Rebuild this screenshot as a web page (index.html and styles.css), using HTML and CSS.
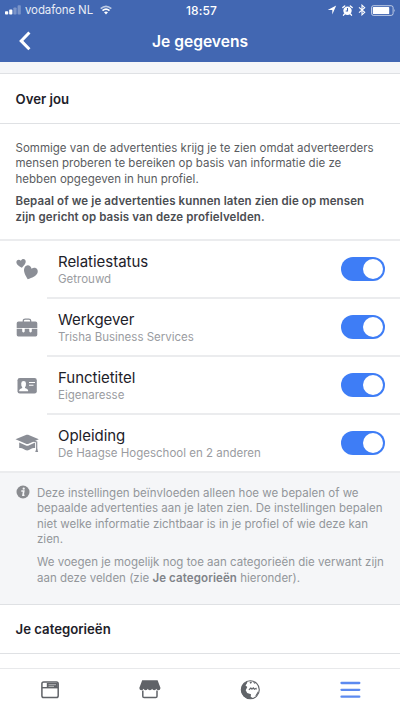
FILE: index.html
```html
<!DOCTYPE html>
<html lang="nl">
<head>
<meta charset="utf-8">
<title>Je gegevens</title>
<link rel="stylesheet" href="styles.css">
</head>
<body>
<div class="screen">
  <header class="header">
    <div class="status">
      <div class="carrier">
        <svg width="16" height="10" viewBox="0 0 16 10" fill="#fff"><rect y="6.2" width="3.2" height="3.3" rx=".8"/><rect x="4.2" y="4.6" width="3.2" height="4.9" rx=".8"/><g opacity=".3"><rect x="8.4" y="2.5" width="3.2" height="7" rx=".8"/><rect x="12.6" y=".3" width="3.2" height="9.2" rx=".8"/></g></svg>
        <span class="carrier-name">vodafone NL</span>
        <svg class="wifi" width="12" height="10" viewBox="0 0 12 10" fill="none" stroke="#fff"><path d="M.7 3.700Q6-1 11.300 3.700" stroke-width="1.700" opacity=".65"/><path d="M2.500 5.600Q6 2.500 9.500 5.600" stroke-width="1.700"/><path d="M4 7.200Q6 5.600 8 7.200L6 9.500z" fill="#fff" stroke="none"/></svg>
      </div>
      <div class="time">18:57</div>
      <div class="indicators">
        <svg width="10" height="10" viewBox="0 0 10 10"><path fill="#fff" d="M9.2.6 5.3 9.4V4.9H.7z"/></svg>
        <svg width="11" height="11" viewBox="0 0 11 11" fill="none"><circle cx="5.5" cy="5.8" r="4.2" fill="#fff"/><path d="M.8 2.5 2.7.9M10.2 2.5 8.3.9M2.5 9 1.5 10.2M8.5 9l1 1.2" stroke="#fff" stroke-width="1.3" stroke-linecap="round"/><path d="M5.5 3.1V6H3.7" stroke="#4267b2" stroke-width="1.1"/></svg>
        <svg class="bluetooth" width="8" height="12" viewBox="0 0 8 12" fill="none" stroke="#fff" stroke-width="1.1"><path d="M1 3.4 6.7 8.3 4 10.8V1.2l2.7 2.5L1 8.6"/></svg>
        <svg class="battery" width="25" height="11" viewBox="0 0 25 11"><rect x=".5" y=".7" width="21.6" height="9.7" rx="2" fill="none" stroke="#fff" stroke-opacity=".65"/><rect x="1.8" y="2" width="16.4" height="7.1" rx=".7" fill="#fff"/><path d="M23.3 3.7q1.5 1.8 0 3.6z" fill="#fff" opacity=".65"/></svg>
      </div>
    </div>
    <div class="nav">
      <svg class="back" width="12" height="20" viewBox="0 0 12 20"><path d="M10.4 1.5 2.2 9.9l8.2 8.4" fill="none" stroke="#fff" stroke-width="3"/></svg>
      <h1 class="nav-title">Je gegevens</h1>
    </div>
  </header>

  <main class="content">
    <h2 class="section-title">Over jou</h2>
    <section class="intro">
      <p>Sommige van de advertenties krijg je te zien omdat adverteerders<br>mensen proberen te bereiken op basis van informatie die ze<br>hebben opgegeven in hun profiel.</p>
      <p class="strong">Bepaal of we je advertenties kunnen laten zien die op mensen<br>zijn gericht op basis van deze profielvelden.</p>
    </section>

    <ul class="fields">
      <li class="field">
        <svg class="field-icon" width="24" height="24" viewBox="0 0 24 24" fill="#8b8e96"><path transform="translate(6.3 5.6) rotate(-8) scale(.47)" d="M0 9C-5 5-10 1-10-3.500c0-6 7-7.500 10-2.500 3-5 10-3.500 10 2.500C10 1 5 5 0 9z"/><path transform="translate(15 15) rotate(20) scale(.7 .74)" d="M0 9C-5 5-10 1-10-3.500c0-6 7-7.500 10-2.500 3-5 10-3.500 10 2.500C10 1 5 5 0 9z"/></svg>
        <div class="field-body"><div class="field-text"><div class="field-name">Relatiestatus</div><div class="field-value">Getrouwd</div></div><div class="toggle"></div></div>
      </li>
      <li class="field">
        <svg class="field-icon" width="24" height="24" viewBox="0 0 24 24" fill="#8b8e96"><path d="M8.300 6V4.700q0-1.500 2-1.500h3.400q2 0 2 1.500V6" fill="none" stroke="#8b8e96" stroke-width="1.300"/><path d="M3.500 5.500h17q1.800 0 1.800 1.800V12H1.700V7.300Q1.700 5.500 3.500 5.500zM1.700 12.800h5.500V15.500q1.300 1.800 2.500 0v-2.700h4.600v2.700q1.200 1.800 2.500 0v-2.700h5.500v6q0 1.600-1.600 1.600H3.300q-1.600 0-1.600-1.600z"/></svg>
        <div class="field-body"><div class="field-text"><div class="field-name">Werkgever</div><div class="field-value">Trisha Business Services</div></div><div class="toggle"></div></div>
      </li>
      <li class="field">
        <svg class="field-icon" width="24" height="24" viewBox="0 0 24 24"><rect x="2.500" y="4" width="19.300" height="15.500" rx="2.300" fill="#8b8e96"/><path fill="#fff" d="M4.200 17.300v-1q.2-1.300 3-2.300v-.8q-1.100-1.400-1-3.800.1-2.400 2.400-2.400T11 9.400q.1 2.400-1 3.800v.8q2.900 1 3.100 2.300v1z"/><path d="M14 8.500h6M14 11.300h4.500" stroke="#fff" stroke-width="1.100"/></svg>
        <div class="field-body"><div class="field-text"><div class="field-name">Functietitel</div><div class="field-value">Eigenaresse</div></div><div class="toggle"></div></div>
      </li>
      <li class="field">
        <svg class="field-icon" width="24" height="24" viewBox="0 0 24 24" fill="#8b8e96"><path d="m.5 8.300 11-4.500q.8-.3 1.600 0l10.700 4.500-10.700 4.600q-.8.300-1.600 0z"/><path d="m4.200 11.500 7.300 3.200q.8.300 1.600 0l7-3.200v5.600q-2-.6-4.300.9-1.800 1.300-3.700 1.400-1.800-.1-3.600-1.400-2.200-1.500-4.300-.9z"/><path d="M13 8.500 21.700 11v8" fill="none" stroke="#8b8e96" stroke-width="1.200"/><path d="m21.700 16.500 1.500 4.500h-3z"/></svg>
        <div class="field-body"><div class="field-text"><div class="field-name">Opleiding</div><div class="field-value">De Haagse Hogeschool en 2 anderen</div></div><div class="toggle"></div></div>
      </li>
    </ul>

    <section class="notice">
      <svg class="info" width="14" height="14" viewBox="0 0 14 14"><circle cx="7" cy="7" r="6.500" fill="#8a8c90"/><circle cx="7.700" cy="3.700" r="1.150" fill="#f5f6f8"/><path d="M5.300 6h2.500L7 10.300h1.500" fill="none" stroke="#f5f6f8" stroke-width="1.600"/></svg>
      <div class="notice-text">
        <p>Deze instellingen beïnvloeden alleen hoe we bepalen of we<br>bepaalde advertenties aan je laten zien. De instellingen bepalen<br>niet welke informatie zichtbaar is in je profiel of wie deze kan<br>zien.</p>
        <p>We voegen je mogelijk nog toe aan categorieën die verwant zijn<br>aan deze velden (zie <b>Je categorieën</b> hieronder).</p>
      </div>
    </section>
    <h2 class="section-title categories">Je categorieën</h2>
  </main>

  <nav class="tabs">
    <div class="tab"><svg width="24" height="24" viewBox="0 0 24 24"><rect x="3.900" y="4" width="16.300" height="15.500" rx="1.800" fill="none" stroke="#606368" stroke-width="1.500"/><path d="M4 9.700h16" stroke="#606368" stroke-width="1.400"/><path d="M8.800 5h11v4.700h-11z" fill="#606368"/><path d="M10.500 6.700H18M10.500 8.400h5.500" stroke="#c9cacc" stroke-width=".8"/></svg></div>
    <div class="tab"><svg width="24" height="24" viewBox="0 0 24 24"><path d="M4.800 12.500v5.800q0 1.300 1.300 1.300h11.600q1.300 0 1.300-1.300v-5.800" fill="none" stroke="#606368" stroke-width="1.500"/><path fill="#606368" d="M4.200 2.300h15.400l2.900 7.700q-.2 2.200-2.100 2.200t-2.100-1.400q-.3 1.400-2.100 1.400t-2.100-1.400q-.3 1.400-2.200 1.400t-2.100-1.400q-.3 1.400-2.100 1.400t-2.100-1.400q-.3 1.400-2.200 1.400-1.900 0-2.100-2.200z"/></svg></div>
    <div class="tab"><svg width="24" height="24" viewBox="0 0 24 24"><circle cx="12.300" cy="11.800" r="9" fill="#fff" stroke="#606368" stroke-width="1.100"/><g fill="#606368"><path d="M9.500 3.200a9 9 0 0 0 2.800 17.600l2.700-.5-2.300-1.600.3-2.500-3.800-1.200-1.500-2.700 1.600-3.300-1.800-1.500 1.500-2.300z"/><path d="m11.500 4.600 1.500-1.200 1 1.300-1.500 1zM15 3.500l2.700 1.500-1.500.8zM10.500 11.500l2.200-2.200 1.500.9 1-1.300 1.600 1.500 1.500-.8.700 2-1.500-.4-.8.900-1.500-1-1.200.7-1.500-.8-1.200 1.200zM17.200 18l2.700-4.500.7.500-1.600 3.500z"/></g></svg></div>
    <div class="tab"><svg width="24" height="24" viewBox="0 0 24 24"><path d="M3.500 5h17.800M3.500 11.800h17.800M3.500 18.700h17.800" stroke="#5c8af0" stroke-width="2.300" stroke-linecap="round"/></svg></div>
  </nav>
</div>
</body>
</html>
```

FILE: styles.css
```css
* { box-sizing: border-box; }
body { margin: 0; font-family: Inter, "Liberation Sans", sans-serif; background: #fff; }
h1, h2, p, ul { margin: 0; padding: 0; }
.screen { width: 400px; height: 711px; display: flex; flex-direction: column; overflow: hidden; white-space: nowrap; }
.screen svg { flex: none; display: block; }

.header { height: 62px; background: #4267b2; color: #fff; flex: none; }
.status { height: 20px; display: grid; grid-template-columns: 1fr auto 1fr; align-items: center; padding: 0 4px 0 5px; font-size: 12px; }
.carrier, .indicators { display: flex; align-items: center; }
.carrier-name { margin-left: 4px; font-size: 11.500px; letter-spacing: -.12px; opacity: .88; }
.wifi { margin-left: 7px; }
.time { font-weight: 500; letter-spacing: .1px; padding-left: 2px; }
.indicators { justify-content: flex-end; }
.indicators svg + svg { margin-left: 5px; }
.nav { height: 42px; display: grid; grid-template-columns: 20px 1fr 20px; align-items: center; padding: 0 19px; }
.nav-title { font-size: 15.600px; line-height: 20px; padding-top: 1px; font-weight: 600; text-align: center; }

.content { flex: none; padding-top: 11px; background: #f5f6f8; }
.section-title { height: 51px; border: solid #dfe1e4; border-width: 1px 0; padding: 0 15.500px; background: #fff; font-size: 13.200px; line-height: 51px; font-weight: 600; color: #1d2129; }
.intro { height: 115px; padding: 16.500px 15.500px 0; background: #fff; font-size: 11.500px; letter-spacing: .01px; line-height: 15.500px; color: #5a5c61; }
.intro p + p, .notice-text p + p { margin-top: 7.500px; }
.intro p + p { margin-top: 7px; }
.strong { font-weight: 600; color: #4b4d52; letter-spacing: .11px; }
.fields { list-style: none; background: #fff; border-top: 2px solid #ebecee; border-bottom: 2px solid #ebecee; }
.field { display: flex; align-items: center; height: 58px; padding-left: 15px; }
.field:last-child { height: 56px; }
.field-body { flex: 1; align-self: stretch; display: flex; justify-content: space-between; align-items: center; margin-left: 8px; padding: 0 15.500px 0 11px; border-bottom: 2px solid #ebecee; }
.field:last-child .field-body { border-bottom: 0; }
.field-name { font-size: 15px; letter-spacing: -.03px; line-height: 18px; color: #1d2129; }
.field-value { font-size: 11.500px; line-height: 16px; color: #9a9ca1; }
.field-text { padding-top: 2px; }
.toggle { width: 43.500px; height: 23.500px; border-radius: 12px; background: #3e7df6; padding: 1.750px 2px; display: flex; justify-content: flex-end; }
.toggle::after { content: ""; width: 20px; height: 20px; border-radius: 50%; background: #fff; }

.notice { height: 131px; display: flex; padding: 12.500px 16px 0; font-size: 11.500px; line-height: 15.500px; color: #93969b; }
.info { margin-top: -.5px; }
.notice-text { margin-left: 7px; }
.notice b { font-weight: 600; color: #808389; letter-spacing: .11px; }
.categories { height: 50px; line-height: 49px; }

.tabs { flex: 1; margin-top: 14px; border-top: 1px solid #e8e9eb; display: grid; grid-template-columns: repeat(4, 1fr); background: #fff; }
.tab { display: flex; justify-content: center; padding-top: 9px; }
```
